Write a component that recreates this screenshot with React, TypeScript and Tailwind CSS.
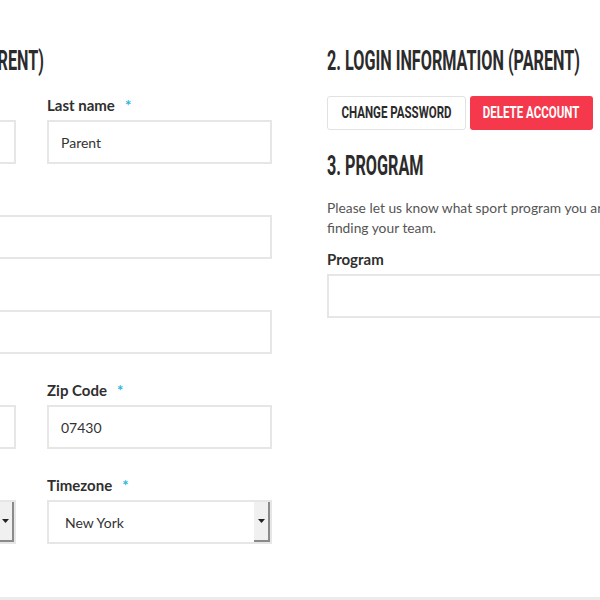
import React from 'react';

const heading = "font-['Roboto',sans-serif] font-bold text-[27px] leading-[40px] text-[#2b2b2b] uppercase whitespace-nowrap";
const btnText = "font-['Roboto',sans-serif] font-bold text-[16px] uppercase whitespace-nowrap inline-block scale-x-[0.72]";
const body = "font-['Lato','Noto_Sans',sans-serif]";

function Heading({ text, className = '' }: { text: string; className?: string }) {
    return (
        <h2 className={`${heading} ${className}`}>
            <span className="inline-block origin-left scale-x-[0.6]">{text}</span>
        </h2>
    );
}

function Label({ text, required }: { text: string; required?: boolean }) {
    return (
        <div className={`${body} h-[20px] mb-[5px] text-[15px] leading-[20px] font-bold text-[#2f2f2f] whitespace-nowrap`}>
            {text}
            {required && <span className="ml-[10px] text-[#2bb5e0]">*</span>}
        </div>
    );
}

function TextInput({ value }: { value?: string }) {
    return (
        <div className={`${body} h-[44px] border-2 border-[#e6e6e6] bg-white flex items-center px-[12px] text-[14px] text-[#333]`}>
            {value}
        </div>
    );
}

function SelectInput({ value }: { value?: string }) {
    return (
        <div className={`${body} h-[44px] border-2 border-[#e6e6e6] bg-white flex items-stretch text-[14px] text-[#333]`}>
            <div className="flex-1 flex items-center pl-[16px]">{value}</div>
            <div className="w-[16px] bg-[#f0f0f0] border-r-2 border-b-2 border-[#8a8a8a] flex items-center justify-center">
                <svg width="7" height="4" viewBox="0 0 7 4">
                    <path d="M0 0h7L3.5 4z" fill="#222" />
                </svg>
            </div>
        </div>
    );
}

function Field({ label, value, required, select }: { label: string; value?: string; required?: boolean; select?: boolean }) {
    return (
        <div className="mb-[26px] flex-1 min-w-0">
            <Label text={label} required={required} />
            {select ? <SelectInput value={value} /> : <TextInput value={value} />}
        </div>
    );
}

export default function App() {
    return (
        <div className="w-[600px] h-[600px] overflow-hidden bg-white flex flex-col">
            <div className="flex-1 pt-[41px]">
                <div className="flex gap-[55px] -ml-[209px]">
                    {/* Basic info */}
                    <div className="w-[481px] shrink-0">
                        <Heading text="1. Basic information (Parent)" className="mb-[14px]" />
                        <div className="flex gap-[31px]">
                            <Field label="First name" value="Alice" required />
                            <Field label="Last name" value="Parent" required />
                        </div>
                        <Field label="Email" value="" required />
                        <Field label="Phone" value="" required />
                        <div className="flex gap-[31px]">
                            <Field label="City" value="" required />
                            <Field label="Zip Code" value="07430" required />
                        </div>
                        <div className="flex gap-[31px]">
                            <Field label="Country" value="United States" select required />
                            <Field label="Timezone" value="New York" select required />
                        </div>
                    </div>

                    {/* Login + program */}
                    <div className="w-[481px] shrink-0">
                        <Heading text="2. Login information (Parent)" />
                        <div className="flex gap-[4px] mt-[15px]">
                            <button className="w-[139px] h-[34px] border border-[#e2e2e2] rounded-[3px] bg-white text-[#2b2b2b] flex items-center justify-center overflow-hidden">
                                <span className={btnText}>Change password</span>
                            </button>
                            <button className="w-[123px] h-[34px] rounded-[3px] bg-[#f5384b] text-white flex items-center justify-center overflow-hidden">
                                <span className={btnText}>Delete account</span>
                            </button>
                        </div>
                        <Heading text="3. Program" className="mt-[16px]" />
                        <p className={`${body} mt-[12px] text-[13.8px] leading-[20px] text-[#555] whitespace-nowrap`}>
                            Please let us know what sport program you are interested in, it will help
                            <br />
                            finding your team.
                        </p>
                        <div className="mt-[11px]">
                            <Label text="Program" />
                            <div className="h-[44px] border-2 border-[#e6e6e6] bg-white" />
                        </div>
                    </div>
                </div>
            </div>
            <div className="h-[3px] bg-[#ebebeb]" />
        </div>
    );
}
